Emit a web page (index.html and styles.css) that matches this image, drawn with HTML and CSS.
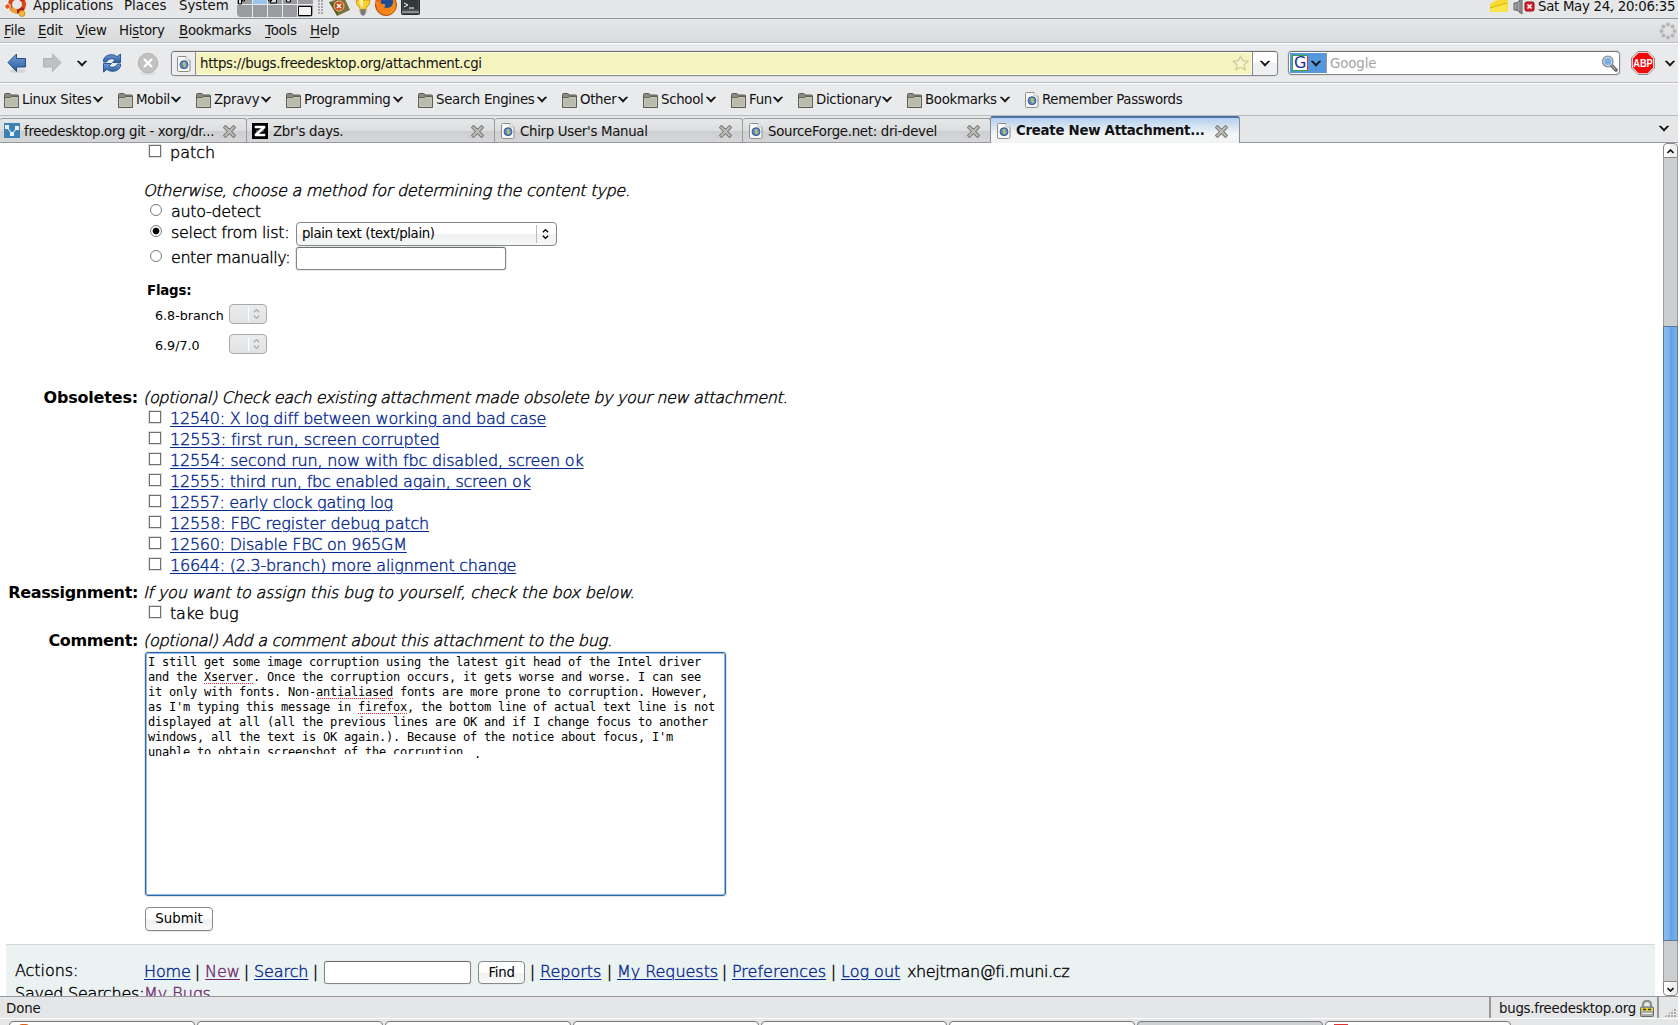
FILE: index.html
```html
<!DOCTYPE html>
<html lang="en">
<head>
<meta charset="utf-8">
<title>Create New Attachment</title>
<link rel="stylesheet" href="styles.css">
</head>
<body>
<svg class="defs" width="0" height="0">
  <defs>
    <linearGradient id="gBlue" x1="0" y1="0" x2="0" y2="1"><stop offset="0" stop-color="#6f9fd6"/><stop offset="1" stop-color="#2c5c9c"/></linearGradient>
    <linearGradient id="gFox" x1="0" y1="0" x2="1" y2="1"><stop offset="0" stop-color="#e0560c"/><stop offset="1" stop-color="#f9a01c"/></linearGradient>
  </defs>
  <symbol id="chev" viewBox="0 0 10 7"><path d="M0 1h2l3 3 3-3h2L5 6.400z" fill="#111" stroke="#111" stroke-width=".4"/></symbol>
  <symbol id="folder" viewBox="0 0 15 15"><path d="M.5 14V1.500q0-1 1-1h4q1 0 1 1V2h7q1 0 1 1v11.500H.5z" fill="#8b8d80" stroke="#5b5d55"/><path d="M1.500 5.500h5l1-1h6v9h-12z" fill="#babbab" stroke="#cfd0c4" stroke-width=".8"/><path d="M1 4.500h5.500l1-1H14" stroke="#5b5d55" fill="none" stroke-width=".9"/></symbol>
  <symbol id="page" viewBox="0 0 14 16"><path d="M1.500.5h7.500l4 4V14q0 1.500-1.500 1.500h-10Q.5 15.500.5 14V1.500q0-1 1-1z" fill="#f8f8f6" stroke="#8c8e8a"/><path d="M9 .5V4h4" fill="#fff" stroke="#aaa" stroke-width=".8"/><circle cx="7" cy="8.700" r="4" fill="#5c86c4" stroke="#34548c" stroke-width=".9"/><path d="M5.500 6.500l2-.6 1.500 1-1 1 1.500 1.300-1.500 2.300-1.500-1z" fill="#b8c46a"/></symbol>
  <symbol id="close" viewBox="0 0 13 13"><path d="M2.500 2.500l8 8M10.500 2.500l-8 8" stroke="#7f807c" stroke-width="4" stroke-linecap="square"/><path d="M2.500 2.500l8 8M10.500 2.500l-8 8" stroke="#c4c5c1" stroke-width="1.700" stroke-linecap="square"/></symbol>
  <symbol id="updown" viewBox="0 0 8 12"><path d="M1 4l3-3 3 3M1 8l3 3 3-3" fill="none" stroke="currentColor" stroke-width="1.600"/></symbol>
</svg>
<div class="screen">
  <header class="panel">
    <svg class="ubuntu" width="24" height="19" viewBox="0 0 24 19"><circle cx="13" cy="4.500" r="7" fill="none" stroke="#d9480f" stroke-width="4"/><path d="M7 8.500A7 7 0 0 0 13 11.500" fill="none" stroke="#f0a030" stroke-width="4"/><path d="M13 11.500A7 7 0 0 0 19 8" fill="none" stroke="#b3200e" stroke-width="4"/><circle cx="3.500" cy="6.500" r="2.800" fill="#e2571a" stroke="#fff"/><circle cx="18" cy="13.500" r="3" fill="#f4b93d" stroke="#c8871c" stroke-width=".8"/><circle cx="18" cy="-2" r="3" fill="#c22"/></svg>
    <nav class="panel-menu"><span class="w-app">Applications</span><span class="w-pla">Places</span><span class="w-sys">System</span></nav>
    <svg class="pager" width="76" height="17" viewBox="0 0 76 17"><path d="M0 0h76v13q0 4-4 4H4q-4 0-4-4z" fill="#999b9e"/><path d="M16 0h14v4H16z" fill="#9cc5ee"/><path d="M15.500 0v17M30.500 0v17M45.500 0v17M60.500 0v17M0 4.500h76" stroke="#e9eaec" fill="none"/><path d="M1.500-2h3v6h-3zM5.500-2h2v3h-2zM31.500-2h3v3h-3zM33.500-2h6v5h-6zM49.500-2h4v4h-4z" fill="#d8d8d8" stroke="#000"/><path d="M61.500 6.500h13v9h-13z" fill="#f3f3f3" stroke="#000"/></svg>
    <i class="grip"></i>
    <svg class="launchers" width="94" height="17" viewBox="0 0 94 17"><path d="M1 2l15-5 6 13-13 6z" fill="#77713f"/><path d="M1 2l9 3 0 11z" fill="#49651d"/><circle cx="11" cy="6" r="5" fill="#c84c1c" stroke="#f1c08e"/><path d="M9 4l4 4M13 4L9 8" stroke="#fff" stroke-width="1.500"/><path d="M28 0h14q0 5-4 8v4h-6V8q-4-3-4-8z" fill="#fccf2c" stroke="#d59513"/><path d="M31 0h4v7h-2z" fill="#fff3a0"/><path d="M32.500 9h5v5l-2.500 2-2.500-2z" fill="#777c82"/><circle cx="58" cy="5" r="10.500" fill="url(#gFox)" stroke="#b5430b"/><circle cx="59" cy="2" r="6" fill="#1d4c96"/><path d="M47 0q4 1 5 4l5 0q1 3-3 4 4 4 11-1-3 8-10 6-6-2-8-13z" fill="#f5821f"/><path d="M73.500-2h18v15.500q0 1-1 1h-16q-1 0-1-1z" fill="#4a4f50" stroke="#25292a"/><path d="M75-1h15v10H75z" fill="#343a3b"/><path d="M76 3l4 2-4 2M81 8h5" stroke="#fff" fill="none"/><path d="M74 12h17" stroke="#ccc"/></svg>
    <span class="fill"></span>
    <svg class="tray" width="46" height="17" viewBox="0 0 46 17"><path d="M1 4Q8-1 17-3l2 3v10q0 2-2 2H3q-2 0-2-2z" fill="#f6dc32"/><path d="M1 8l17-5v7q0 2-2 2H3q-2 0-2-2z" fill="#f9e64c"/><path d="M1 8l17-5" stroke="#d7b313"/><path d="M25 3h3l5-5v16l-5-4h-3z" fill="#a9aaac" stroke="#5b5d5f"/><path d="M28 2v9M31 0v13" stroke="#67696b"/><rect x="36" y="2" width="9" height="9" rx="1.500" fill="#dd1d2b" stroke="#8d0c16"/><path d="M38.500 4.500l4 4M42.500 4.500l-4 4" stroke="#fff" stroke-width="1.700"/></svg>
    <span class="clock">Sat May 24, 20:06:35</span>
  </header>

  <nav class="menubar">
    <span class="m1"><u>F</u>ile</span><span class="m2"><u>E</u>dit</span><span class="m3"><u>V</u>iew</span><span class="m4">Hi<u>s</u>tory</span><span class="m5"><u>B</u>ookmarks</span><span class="m6"><u>T</u>ools</span><span class="m7"><u>H</u>elp</span>
    <svg class="throbber" width="18" height="18" viewBox="0 0 18 18"><g fill="#b4b5b7"><circle cx="9" cy="2.500" r="2"/><circle cx="13.600" cy="4.400" r="2"/><circle cx="15.500" cy="9" r="2"/><circle cx="13.600" cy="13.600" r="2"/><circle cx="9" cy="15.500" r="2"/><circle cx="4.400" cy="13.600" r="2"/><circle cx="2.500" cy="9" r="2"/><circle cx="4.400" cy="4.400" r="2"/></g></svg>
  </nav>

  <div class="navbar">
    <svg class="arrow-back" width="20" height="22" viewBox="0 0 20 22"><ellipse cx="11" cy="19" rx="8" ry="2" fill="#d5d6d8"/><path d="M1 10.500L9.500 2v4.500h9v8.500h-9v4.500z" fill="url(#gBlue)" stroke="#214c85"/></svg>
    <svg class="arrow-fwd" width="20" height="22" viewBox="0 0 20 22"><path d="M19 10.500L10.500 2v4.500h-9v8.500h9v4.500z" fill="#bfc0c1" stroke="#b2b3b4"/></svg>
    <svg class="nav-chev" width="10" height="7"><use href="#chev"/></svg>
    <svg class="reload" width="20" height="20" viewBox="0 0 20 20"><path d="M1.500 9V7Q3 2 9 1.700q4-.2 6 2L18.500 1v8.500h-8L13 7q-1.500-1.500-4-1.300Q5.500 6 4.500 9z" fill="url(#gBlue)" stroke="#2a5898"/><path d="M18.500 11v2Q17 18 11 18.300q-4 .2-6-2L1.500 19v-8.500h8L7 13q1.500 1.500 4 1.300 3.500-.3 4.500-3.300z" fill="url(#gBlue)" stroke="#2a5898"/></svg>
    <svg class="stop" width="22" height="24" viewBox="0 0 22 24"><ellipse cx="11" cy="21" rx="8" ry="2" fill="#d9dadb"/><circle cx="11" cy="11" r="9.700" fill="#c2c1c1" stroke="#b5b4b4"/><path d="M7 7l8 8M15 7l-8 8" stroke="#fff" stroke-width="2.400"/></svg>
    <div class="urlbox">
      <span class="favslot"><svg width="14" height="16"><use href="#page"/></svg></span>
      <span class="url"><span class="urltext">https://bugs.freedesktop.org/attachment.cgi</span><svg width="17" height="16" viewBox="0 0 17 16"><path d="M8.500 1l2.200 4.700 5.300.5-4 3.600 1.200 5-4.700-2.500-4.700 2.500 1.200-5-4-3.600 5.300-.5z" fill="#f6f6cc" stroke="#cdcc9c" stroke-width="1.300" stroke-linejoin="round"/></svg></span>
      <span class="urldrop"><svg width="10" height="7"><use href="#chev"/></svg></span>
    </div>
    <div class="searchbox">
      <span class="engine"><b>G</b><svg width="10" height="7"><use href="#chev"/></svg></span>
      <span class="ph">Google</span>
      <svg width="17" height="17" viewBox="0 0 17 17"><path d="M10 10l5 5" stroke="#666" stroke-width="3.600" stroke-linecap="round"/><path d="M11 11l3.500 3.500" stroke="#aaa" stroke-width="1.300"/><circle cx="6.800" cy="6.500" r="5.300" fill="#c4dcf2" stroke="#8a8f96" stroke-width="1.300"/><circle cx="6.800" cy="6.500" r="3.500" fill="#7eaee0"/></svg>
    </div>
    <svg class="abp" width="24" height="24" viewBox="0 0 24 24"><path d="M7 .5h10l6.500 6.500v10L17 23.500H7L.5 17V7z" fill="#fff" stroke="#888"/><path d="M7.500 1.800h9l5.700 5.700v9l-5.700 5.700h-9l-5.700-5.700v-9z" fill="#f00a0a"/><text x="12" y="16" text-anchor="middle" textLength="19.500" lengthAdjust="spacingAndGlyphs" class="abptext">ABP</text></svg>
    <svg class="abp-chev" width="10" height="7"><use href="#chev"/></svg>
  </div>

  <nav class="bookmarks">
    <span class="bm b1"><svg class="f"><use href="#folder"/></svg><em>Linux Sites</em><svg class="c"><use href="#chev"/></svg></span>
    <span class="bm b2"><svg class="f"><use href="#folder"/></svg><em>Mobil</em><svg class="c"><use href="#chev"/></svg></span>
    <span class="bm b3"><svg class="f"><use href="#folder"/></svg><em>Zpravy</em><svg class="c"><use href="#chev"/></svg></span>
    <span class="bm b4"><svg class="f"><use href="#folder"/></svg><em>Programming</em><svg class="c"><use href="#chev"/></svg></span>
    <span class="bm b5"><svg class="f"><use href="#folder"/></svg><em>Search Engines</em><svg class="c"><use href="#chev"/></svg></span>
    <span class="bm b6"><svg class="f"><use href="#folder"/></svg><em>Other</em><svg class="c"><use href="#chev"/></svg></span>
    <span class="bm b7"><svg class="f"><use href="#folder"/></svg><em>School</em><svg class="c"><use href="#chev"/></svg></span>
    <span class="bm b8"><svg class="f"><use href="#folder"/></svg><em>Fun</em><svg class="c"><use href="#chev"/></svg></span>
    <span class="bm b9"><svg class="f"><use href="#folder"/></svg><em>Dictionary</em><svg class="c"><use href="#chev"/></svg></span>
    <span class="bm b10"><svg class="f"><use href="#folder"/></svg><em>Bookmarks</em><svg class="c"><use href="#chev"/></svg></span>
    <span class="bm b11"><svg class="p"><use href="#page"/></svg><em>Remember Passwords</em></span>
  </nav>

  <div class="tabs">
    <div class="tab t1"><svg width="16" height="15" viewBox="0 0 16 15"><path d="M0 0h16v15H0z" fill="#3c83b4"/><path d="M3 4l5 7 5-6" stroke="#a9cbe0" stroke-width="1.500" fill="none"/><path d="M1 2h4v4H1zM11 3h4v4h-4zM6 9h4v4H6z" fill="#e6f0f6"/></svg><em>freedesktop.org git - xorg/dr...</em><svg class="x"><use href="#close"/></svg></div>
    <div class="tab t2"><svg width="16" height="16" viewBox="0 0 16 16"><path d="M0 0h16v16H0z"/><path d="M3 3h10v2L6.500 11H13v2H3v-2l6.500-6H3zM4 8h8" fill="#fff" stroke="#fff" stroke-width=".5"/></svg><em>Zbr's days.</em><svg class="x"><use href="#close"/></svg></div>
    <div class="tab t3"><svg width="14" height="16"><use href="#page"/></svg><em>Chirp User's Manual</em><svg class="x"><use href="#close"/></svg></div>
    <div class="tab t4"><svg width="14" height="16"><use href="#page"/></svg><em>SourceForge.net: dri-devel</em><svg class="x"><use href="#close"/></svg></div>
    <div class="tab t5 active"><svg width="14" height="16"><use href="#page"/></svg><em>Create New Attachment...</em><svg class="x"><use href="#close"/></svg></div>
    <svg class="alltabs" width="10" height="7"><use href="#chev"/></svg>
  </div>

  <div class="viewport">
    <main class="doc">
      <div class="line patch"><i class="cb"></i><span class="s-patch">patch</span></div>
      <div class="line method it"><span class="s-method">Otherwise, choose a method for determining the content type.</span></div>
      <div class="line radio"><i class="rb"></i><span class="s-auto">auto-detect</span></div>
      <div class="line radio tall"><i class="rb on"></i><span class="s-sel">select from list:</span><span class="select"><span class="s-plain">plain text (text/plain)</span><svg width="8" height="12"><use href="#updown"/></svg></span></div>
      <div class="line radio tall"><i class="rb"></i><span class="s-ent">enter manually:</span><span class="input manual"></span></div>
      <div class="flags">Flags:</div>
      <div class="flag"><span>6.8-branch</span><i class="mini"><svg width="8" height="12"><use href="#updown"/></svg></i></div>
      <div class="flag second"><span>6.9/7.0</span><i class="mini"><svg width="8" height="12"><use href="#updown"/></svg></i></div>

      <div class="field obs"><b class="lab">Obsoletes:</b><span class="it s-obs">(optional) Check each existing attachment made obsolete by your new attachment.</span></div>
      <div class="line"><i class="cb"></i><a class="l1">12540: X log diff between working and bad case</a></div>
      <div class="line"><i class="cb"></i><a class="l2">12553: first run, screen corrupted</a></div>
      <div class="line"><i class="cb"></i><a class="l3">12554: second run, now with fbc disabled, screen ok</a></div>
      <div class="line"><i class="cb"></i><a class="l4">12555: third run, fbc enabled again, screen ok</a></div>
      <div class="line"><i class="cb"></i><a class="l5">12557: early clock gating log</a></div>
      <div class="line"><i class="cb"></i><a class="l6">12558: FBC register debug patch</a></div>
      <div class="line"><i class="cb"></i><a class="l7">12560: Disable FBC on 965GM</a></div>
      <div class="line"><i class="cb"></i><a class="l8">16644: (2.3-branch) more alignment change</a></div>
      <div class="field"><b class="lab tight">Reassignment:</b><span class="it s-rea">If you want to assign this bug to yourself, check the box below.</span></div>
      <div class="line"><i class="cb"></i><span class="s-take">take bug</span></div>
      <div class="field"><b class="lab tight">Comment:</b><span class="it s-com">(optional) Add a comment about this attachment to the bug.</span></div>
      <div class="textarea">I still get some image corruption using the latest git head of the Intel driver
and the <span class="sp">Xserver</span>. Once the corruption occurs, it gets worse and worse. I can see
it only with fonts. Non-<span class="sp">antialiased</span> fonts are more prone to corruption. However,
as I'm typing this message in <span class="sp">firefox</span>, the bottom line of actual text line is not
displayed at all (all the previous lines are OK and if I change focus to another
windows, all the text is OK again.). Because of the notice about focus, I'm
una<span class="cut">ble to obtain screenshot of the corruption</span>  <span class="dot">.</span></div>
      <div class="button submit">Submit</div>
      <footer class="foot">
        <div class="frow actions"><span class="flab">Actions:</span><span class="links"><a class="k1">Home</a><span class="bar">|</span><a class="v k2">New</a><span class="bar">|</span><a class="k3">Search</a><span class="bar">|</span><span class="input find"></span><span class="button fbtn">Find</span><span class="bar">|</span><a class="k4">Reports</a><span class="bar">|</span><a class="k5">My Requests</a><span class="bar">|</span><a class="k6">Preferences</a><span class="bar">|</span><a class="k7">Log out</a><span class="user">xhejtman@fi.muni.cz</span></span></div>
        <div class="frow saved"><span class="flab">Saved Searches:</span><a class="v">My Bugs</a></div>
      </footer>
    </main>
    <aside class="scroll"><i class="sbtn"><svg width="7" height="5" viewBox="0 0 7 5"><path d="M.5 4l3-3 3 3" fill="none" stroke="#111" stroke-width="1.600"/></svg></i><i class="track1"></i><i class="thumb"></i><i class="track2"></i><i class="sbtn down"><svg width="7" height="5" viewBox="0 0 7 5"><path d="M.5 1l3 3 3-3" fill="none" stroke="#111" stroke-width="1.600"/></svg></i></aside>
  </div>

  <div class="status"><span class="done">Done</span><span class="host"><em>bugs.freedesktop.org</em><svg width="14" height="17" viewBox="0 0 14 17"><path d="M3 8V5q0-4 4-4t4 4v3" fill="none" stroke="#8d8f8b" stroke-width="2.200"/><rect x=".5" y="7" width="13" height="9.500" rx="1" fill="#a9aba5" stroke="#6a6c66"/><path d="M1 8h12v3H1z" fill="#e6d22a"/><path d="M3 9.500h3M8 9.500h3" stroke="#333" stroke-width="1.500"/><path d="M2 13.500h10" stroke="#eee"/></svg></span><i class="corner"></i></div>
  <div class="taskbar"><i class="task"><i class="ff"></i></i><i class="task"></i><i class="task"></i><i class="task"></i><i class="task"></i><i class="task"></i><i class="task pressed"></i><i class="task"><i class="rd"></i></i></div>
</div>
</body>
</html>
```

FILE: styles.css
```css
* { box-sizing: border-box; }
body { margin: 0; background: #fff; overflow: hidden; }
em, i { font-style: normal; }
svg { display: block; flex: none; overflow: hidden; }
.defs { position: absolute; }
.screen { width: 1678px; height: 1025px; display: flex; flex-direction: column; overflow: hidden; font: 13.33px/18px "DejaVu Sans", sans-serif; letter-spacing: -.3px; color: #111; white-space: nowrap; }
.screen > * { flex: none; }
.fill { flex: 1; }

/* desktop panel */
.panel { height: 19px; display: flex; background: #e6e7e8; border-bottom: 1px solid #97999c; overflow: hidden; padding-left: 4px; }
.ubuntu { margin-right: 6px; }
.panel-menu, .clock { margin-top: -3px; height: 18px; }
.panel-menu { display: flex; letter-spacing: 0; }
.w-app { width: 91px; letter-spacing: -.1px; }
.w-pla { width: 55px; }
.w-sys { width: 57px; }
.panel-menu span { position: relative; left: -1px; }
.grip { width: 6px; height: 15px; margin: 0 4px 0 5px; background: radial-gradient(circle at 1px 1px, #aaa 1px, transparent 1.2px) 0 0/3px 3px; }
.clock { width: 140px; margin-left: 3px; margin-top: -2px; }

.menubar { height: 24px; display: flex; background: linear-gradient(#e6e7e8, #d9dadb); border-bottom: 1px solid #b9bbbe; padding: 3px 1px 0 4px; letter-spacing: -.25px; }
.menubar u { text-decoration-thickness: 1px; text-underline-offset: 2px; }
.m1 { width: 34px; } .m2 { width: 38px; } .m3 { width: 43px; } .m4 { width: 60px; } .m5 { width: 86px; } .m6 { width: 45px; } .m7 { flex: 1; }

.navbar { height: 40px; display: flex; align-items: flex-start; background: #e9eaec; border-top: 1px solid #fff; border-bottom: 1px solid #b9bbbe; padding: 7px 0 0 7px; }
.arrow-back { margin: 1px 15px 0 0; }
.arrow-fwd { margin: 1px 15px 0 0; }
.nav-chev { margin: 9px 15px 0 0; }
.reload { margin: 2px 15px 0 0; }
.stop { margin: 1px 12px 0 0; }
.urlbox, .searchbox { height: 25px; border: 1px solid #85878a; border-top-color: #6d6f71; border-radius: 4px; background: #fff; box-shadow: 0 0 0 1px #dcddde; display: flex; overflow: hidden; }
.urlbox { width: 1107px; margin-right: 10px; }
.favslot { width: 24px; padding: 4px 0 0 5px; border-right: 1px solid #8a8c8f; background: #eee; }
.url { flex: 1; background: #f5f4be; border: 1px solid #fdfde8; border-left: 0; display: flex; justify-content: space-between; padding: 2px 2px 0 4px; letter-spacing: -.32px; }
.urldrop { width: 25px; border-left: 1px solid #85878a; padding: 8px 0 0 7px; background: linear-gradient(#fff 50%, #eff0f1 50%); }
.searchbox { width: 332px; margin-right: 11px; height: 24px; }
.engine { width: 37px; margin: 1px 0 1px 1px; padding: 2px; background: #5597dc; border-right: 1px solid #999; display: flex; gap: 3px; }
.engine b { width: 16px; height: 16px; background: #fff; border: 1px solid #3ba33b; border-right-color: #d33; color: #1c2f9c; font: 16px/14px "DejaVu Sans", sans-serif; text-align: center; }
.engine svg { margin-top: 5px; }
.ph { flex: 1; color: #a3a4a5; padding: 3px 0 0 3px; letter-spacing: -.1px; }
.searchbox > svg { margin: 3px 1px 0 0; }
.abptext { font: bold 11px "Liberation Sans", sans-serif; fill: #fff; letter-spacing: 0; }
.abp-chev { margin: 9px 0 0 10px; }

.bookmarks { height: 33px; display: flex; background: #e9eaec; border-top: 1px solid #fff; border-bottom: 1px solid #b9bbbe; padding: 7px 0 0 4px; }
.bm { display: flex; }
.bm em { flex: 1; padding-left: 3px; }
.bm.b11 em { letter-spacing: -.35px; }
.f { width: 15px; height: 15px; margin-top: 2px; }
.p { width: 14px; height: 16px; margin-top: 1px; }
.c { width: 10px; height: 7px; margin: 5px 15px 0 0; }
.b1 { width: 114px; } .b2 { width: 78px; } .b3 { width: 90px; } .b4 { width: 132px; } .b5 { width: 144px; } .b6 { width: 81px; } .b7 { width: 88px; } .b8 { width: 67px; } .b9 { width: 109px; } .b10 { width: 118px; }

.tabs { height: 27px; display: flex; align-items: flex-end; background: #e5e6e7; border-bottom: 1px solid #96989b; }
.tab { height: 24px; width: 248px; display: flex; border: 1px solid #9a9ca0; border-width: 1px 1px 0 0; border-radius: 3px 3px 0 0; background: linear-gradient(#e6e7e8 0, #dcddde 52%, #cecfd0 54%, #d6d7d8); padding: 4px 10px 0 6px; }
.tab em { flex: 1; padding-left: 5px; }
.tab .x { width: 13px; height: 13px; margin-top: 2px; }
.t1 { width: 247px; padding-left: 4px; }
.t1 em { padding-left: 4px; }
.t2 { padding-left: 5px; }
.t2 em { padding-left: 5px; }
.tab.active { height: 27px; width: 250px; margin: 0 0 -1px -1px; border: 1px solid #8a8d92; border-bottom: 0; border-top: 2px solid #4a74a6; background: linear-gradient(#b4d0ee, #f3f5f7 65%, #f1f3f3); font-weight: bold; padding-top: 5px; padding-right: 11px; }
.tab.t5 em { margin-top: -1px; letter-spacing: -.27px; }
.alltabs { margin: 0 9px 10px auto; }

/* page */
.viewport { height: 853px; display: flex; overflow: hidden; background: #fff; }
.doc { width: 1663px; height: 853px; overflow: hidden; font: 200 16px/21px "DejaVu Sans Light", "DejaVu Sans", sans-serif; letter-spacing: 0; color: #000; -webkit-text-stroke: .4px; }
.line { height: 21px; display: flex; padding-left: 149px; }
.it { font-style: italic; }
.cb { width: 12px; height: 12px; margin: 3px 9px 0 0; border: 1px solid #6e7072; box-shadow: 0 0 0 1px #dcdddd; flex: none; }
.rb { width: 12px; height: 12px; margin: 3px 9px 0 1px; border: 1px solid #77797b; border-radius: 50%; flex: none; }
.rb.on { background: radial-gradient(circle, #000 2.8px, #fff 3.8px); }
.patch { margin-top: -1px; }
.method { margin-top: 17px; padding-left: 143px; }
.tall { height: 25px; }
.s-method { letter-spacing: -.26px; }
.s-obs { letter-spacing: -.35px; }
.s-rea { letter-spacing: -.2px; }
.s-com { letter-spacing: -.29px; }
.s-auto { letter-spacing: -.33px; }
.s-sel, .s-ent { width: 125px; letter-spacing: -.33px; }
.s-ent { letter-spacing: -.45px; }
.s-take { letter-spacing: -.15px; }
.l1, .l4 { letter-spacing: -.23px; }
.l2 { letter-spacing: -.05px; }
.l3 { letter-spacing: -.17px; }
.l5 { letter-spacing: -.3px; }
.l6 { letter-spacing: -.14px; }
.l7, .l8 { letter-spacing: -.24px; }
.select { width: 261px; height: 24px; border: 1px solid #85878a; border-radius: 4px; background: linear-gradient(#fff 50%, #f0f1f2 52%, #f6f7f7); display: flex; font: 400 13.33px/22px "DejaVu Sans", sans-serif; letter-spacing: -.36px; padding-left: 5px; color: #000; -webkit-text-stroke: 0; }
.s-plain { flex: 1; }
.select svg { width: 20px; height: 18px; padding: 3px 7px 3px 5px; margin-top: 2px; border-left: 1px solid #b9bbbd; }
.input { border: 1px solid #85878a; border-top-color: #6d6f71; border-radius: 3px; background: #fff; box-shadow: 0 0 0 1px #e8e9e9; }
.manual { width: 210px; height: 23px; }
.flags { font: bold 13.33px/18px "DejaVu Sans", sans-serif; letter-spacing: -.2px; padding-left: 147px; margin-top: 10px; height: 22px; -webkit-text-stroke: 0; }
.flag { display: flex; height: 21px; padding-left: 155px; font: 400 12.7px/24px "DejaVu Sans", sans-serif; -webkit-text-stroke: 0; }
.flag span { width: 74px; }
.flag.second { margin-top: 9px; }
.mini { width: 38px; height: 20px; border: 1px solid #a9abae; border-radius: 4px; background: linear-gradient(#ebeced, #e1e2e4); color: #a9abae; }
.mini svg { width: 18px; height: 14px; padding: 1px 6px 1px 4px; margin: 2px 0 0 18px; border-left: 1px solid #fff; }
.obs { margin-top: 32px !important; }
.field { display: flex; height: 21px; margin-top: 6px; }
.lab { width: 138px; margin-right: 5px; text-align: right; font-weight: bold; font-family: "DejaVu Sans", sans-serif; letter-spacing: -.18px; -webkit-text-stroke: 0; }
.lab.tight { letter-spacing: -.35px; }
a { color: #06298f; text-decoration: underline; text-decoration-thickness: 1px; text-underline-offset: 2px; }
a.v { color: #6d2a6f; }
.textarea { margin: 1px 0 11px 145px; width: 581px; height: 244px; border: 1px solid #33659f; border-radius: 3px; box-shadow: inset 0 0 0 1px #8dbcee, 0 0 0 1px #e2e5e8; padding: 2px 0 0 2px; font: 400 12px/15px "DejaVu Sans Mono", monospace; letter-spacing: -.224px; white-space: pre; -webkit-text-stroke: 0; }
.sp { background: repeating-linear-gradient(90deg, #e22 0 1px, transparent 1px 2px) 0 100%/100% 1px no-repeat; }
.cut { display: inline-block; height: 9px; line-height: 15px; overflow: hidden; vertical-align: top; }
.dot { position: relative; top: 2px; left: -3px; }
.button { border: 1px solid #85878a; border-radius: 4px; background: linear-gradient(#fff 50%, #eff0f1 54%, #fafafa); font: 400 13.33px/21px "DejaVu Sans", sans-serif; text-align: center; box-shadow: 0 1px 0 #e8e8e8; -webkit-text-stroke: 0; }
.submit { width: 68px; height: 24px; margin-left: 145px; line-height: 22px; }
.foot { margin: 13px 8px 0 6px; height: 60px; border-top: 1px solid #d3dad9; background: #ebf2f2; padding: 15px 0 0 9px; }
.frow { display: flex; height: 23px; }
.flab { width: 129px; letter-spacing: -.05px; }
.saved .flab { letter-spacing: -.25px; }
.links { display: flex; padding-top: 1px; }
.bar { width: 15px; text-align: center; }
.k1 { width: 46px; letter-spacing: -.15px; }
.k2 { width: 34px; }
.k3 { width: 54px; letter-spacing: -.1px; }
.k4 { width: 62px; }
.k5 { width: 100px; letter-spacing: -.05px; }
.k6 { width: 94px; }
.k7 { width: 60px; }
.find { width: 147px; height: 23px; margin: 0 7px 0 1px; }
.fbtn { width: 47px; height: 23px; letter-spacing: -.3px; }
.user { margin-left: 6px; letter-spacing: -.38px; }

.scroll { width: 15px; display: flex; flex-direction: column; }
.sbtn { height: 15px; border: 1px solid #85878a; border-radius: 4px 4px 0 0; background: linear-gradient(90deg, #fff 50%, #eee 50%); padding: 5px 3px; }
.sbtn.down { border-radius: 0 0 4px 4px; }
.track1, .track2 { background: #cdced0; border: 1px solid #9b9da0; border-width: 0 1px; }
.track1 { height: 168px; }
.thumb { height: 615px; border: 1px solid #56779e; background: linear-gradient(90deg, #8abcf2, #76b0ee 48%, #62a0e2 50%, #7cb2ec); }
.track2 { flex: 1; }

.status { height: 23px; display: flex; background: #e5e6e7; border-top: 1px solid #96989b; padding-left: 6px; border-bottom: 1px solid #fff; }
.done { flex: 1; padding-top: 3px; letter-spacing: -.1px; }
.host { width: 170px; border-left: 2px solid #97999c; border-right: 2px solid #97999c; padding: 3px 3px 0 8px; display: flex; justify-content: space-between; letter-spacing: -.26px; }
.corner { width: 19px; background: radial-gradient(circle at 1px 1px, #aaa 1px, transparent 1.2px) 0 0/3px 3px; clip-path: polygon(90% 50%, 90% 100%, 20% 100%); }
.taskbar { height: 6px; display: flex; background: #e5e6e7; border-top: 1px solid #e5e6e7; padding: 1px 0 0 9px; gap: 2px; overflow: hidden; }
.task { width: 186px; height: 12px; flex: none; border: 1px solid #77797c; border-radius: 4px; background: #fff; padding-left: 9px; }
.pressed { background: #cfd0d2; }
.ff, .rd { display: block; width: 10px; height: 4px; margin-top: 2px; border-radius: 3px 3px 0 0; background: #d9651a; }
.rd { width: 14px; border-radius: 0; background: #d33; margin-left: -1px; }
```
